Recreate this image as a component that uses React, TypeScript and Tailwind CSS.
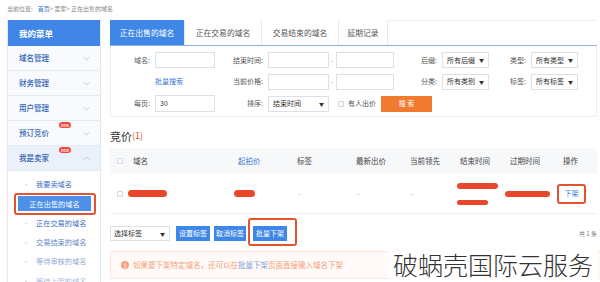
import React from "react";

const FONT = "font-['Noto_Sans_CJK_SC','Noto_Sans',sans-serif]";

function Chevron({ up = false }: { up?: boolean }) {
  return (
    <svg width="7" height="5" viewBox="0 0 7 5" className="text-[#c3cbd6]">
      <path
        d={up ? "M0.5 4L3.5 1L6.5 4" : "M0.5 1L3.5 4L6.5 1"}
        fill="none"
        stroke="currentColor"
        strokeWidth="0.9"
      />
    </svg>
  );
}

function NewBadge() {
  return (
    <span className="absolute -top-[5px] left-[40px] flex h-[6px] w-[12px] items-center justify-center rounded-[3px] bg-[#f0493a] text-[4px] leading-none text-white">
      new
    </span>
  );
}

function MenuItem({
  label,
  badge = false,
  open = false,
}: {
  label: string;
  badge?: boolean;
  open?: boolean;
}) {
  return (
    <div
      className={`flex h-[25px] items-center justify-between border-b border-[#e6ebf2] pl-[11px] pr-[10px] ${
        open ? "bg-[#ebf1fa]" : "bg-[#f8fafd]"
      }`}
    >
      <span className="relative text-[7.5px] font-medium text-[#2f62b0]">
        {label}
        {badge && <NewBadge />}
      </span>
      <Chevron up={open} />
    </div>
  );
}

function SubItem({ label, tone }: { label: string; tone: string }) {
  return (
    <div className="flex h-[19.3px] items-center pl-[15px]">
      <span className="mr-[7px] text-[6px] text-[#b9c2ce]">•</span>
      <span className={`text-[7.2px] ${tone}`}>{label}</span>
    </div>
  );
}

function Sidebar() {
  return (
    <div className="h-[262px] w-[94px] shrink-0 border-x border-[#e3e8ef] bg-white">
      <div className="flex h-[26px] items-center bg-[#4186e6] pl-[11px] text-[8.5px] font-bold text-white">
        我的菜单
      </div>
      <MenuItem label="域名管理" />
      <MenuItem label="财务管理" />
      <MenuItem label="用户管理" />
      <MenuItem label="预订竞价" badge />
      <MenuItem label="我是卖家" badge open />
      <div className="pt-[4px]">
        <SubItem label="我要卖域名" tone="text-[#3a6cc0]" />
        <div className="relative flex h-[19.3px] items-center">
          <div className="absolute left-[6px] top-[-1px] h-[22px] w-[82px] rounded-[3px] border-2 border-[#e4532f]" />
          <div className="ml-[10px] flex h-[15px] w-[73px] items-center justify-center bg-[#4c90ea] text-[7.2px] text-white">
            正在出售的域名
          </div>
        </div>
        <SubItem label="正在交易的域名" tone="text-[#3a6cc0]" />
        <SubItem label="交易结束的域名" tone="text-[#5f86c8]" />
        <SubItem label="等待审核的域名" tone="text-[#93aad6]" />
        <SubItem label="等待上架的域名" tone="text-[#a9bbe0]" />
      </div>
    </div>
  );
}

function Input({ w, value }: { w: string; value?: string }) {
  return (
    <div
      className={`flex h-[16px] items-center border border-[#dde1e7] bg-white pl-[4px] text-[7px] text-[#333] ${w}`}
    >
      {value}
    </div>
  );
}

function Select({ w, value }: { w: string; value: string }) {
  return (
    <div
      className={`flex h-[16px] items-center justify-between border border-[#dde1e7] bg-white pl-[4px] pr-[4px] text-[7px] text-[#333] ${w}`}
    >
      <span>{value}</span>
      <span className="text-[5px]">▼</span>
    </div>
  );
}

function Label({ w, text }: { w: string; text: string }) {
  return (
    <div className={`pr-[5px] text-right text-[7px] text-[#555] ${w}`}>
      {text}
    </div>
  );
}

function Tabs() {
  const tabs = ["正在出售的域名", "正在交易的域名", "交易结束的域名", "延期记录"];
  return (
    <div className="flex h-[26px] border-b border-[#8fb2e6] bg-white">
      {tabs.map((t, i) => (
        <div
          key={t}
          className={`flex items-center border-r border-[#e6e9ee] text-[7.8px] ${
            i === 0
              ? "w-[75px] justify-center bg-[#3f87e6] text-white"
              : i === 3
                ? "w-[49px] justify-center text-[#555]"
                : "w-[77px] justify-center text-[#555]"
          }`}
        >
          {t}
        </div>
      ))}
      <div className="flex-1 border-t border-[#eef0f3]" />
    </div>
  );
}

function SearchForm() {
  return (
    <div className="flex flex-col gap-[6px] border-x border-b border-[#eceef2] pb-[4px] pt-[6px]">
      <div className="flex items-center">
        <Label w="w-[44px]" text="域名:" />
        <Input w="w-[60px]" />
        <Label w="w-[53px]" text="结束时间:" />
        <Input w="w-[61px]" />
        <div className="w-[7px] text-center text-[7px] text-[#999]">-</div>
        <Input w="w-[58px]" />
        <Label w="w-[48px]" text="后缀:" />
        <Select w="w-[47px]" value="所有后缀" />
        <Label w="w-[42px]" text="类型:" />
        <Select w="w-[47px]" value="所有类型" />
      </div>
      <div className="flex h-[15px] items-center">
        <div className="w-[44px]" />
        <div className="w-[60px] text-[7px] text-[#3a76d4]">批量搜索</div>
        <Label w="w-[53px]" text="当前价格:" />
        <Input w="w-[61px]" />
        <div className="w-[7px] text-center text-[7px] text-[#999]">-</div>
        <Input w="w-[58px]" />
        <Label w="w-[48px]" text="分类:" />
        <Select w="w-[47px]" value="所有类别" />
        <Label w="w-[42px]" text="标签:" />
        <Select w="w-[47px]" value="所有标签" />
      </div>
      <div className="flex h-[17px] items-center">
        <Label w="w-[44px]" text="每页:" />
        <Input w="w-[60px] h-[17px]" value="30" />
        <Label w="w-[53px]" text="排序:" />
        <Select w="w-[61px]" value="结束时间" />
        <div className="ml-[9px] h-[6px] w-[6px] rounded-[1px] border border-[#cfd4db]" />
        <div className="ml-[4px] text-[7px] text-[#555]">有人出价</div>
        <div className="ml-[5px] flex h-[16px] w-[51px] items-center justify-center bg-[#f07b2f] text-[7px] text-white">
          搜 索
        </div>
      </div>
    </div>
  );
}

function Bar({ w, h = "h-[7px]", cls = "" }: { w: string; h?: string; cls?: string }) {
  return <div className={`rounded-full bg-[#e9472b] ${w} ${h} ${cls}`} />;
}

function Check() {
  return <div className="h-[6px] w-[6px] rounded-[1px] border border-[#d3d7dd] bg-white" />;
}

const COLS = "grid grid-cols-[18px_106px_63px_59px_54px_47px_48px_52px_1fr]";

function Table() {
  return (
    <div>
      <div className={`${COLS} h-[26px] items-center bg-[#f7f8fa] text-[7.5px] text-[#444]`}>
        <div className="pl-[7px]">
          <Check />
        </div>
        <div className="pl-[5px]">域名</div>
        <div className="pl-[4px] text-[#3a76d4]">起拍价</div>
        <div>标签</div>
        <div>最新出价</div>
        <div>当前领先</div>
        <div className="pl-[3px]">结束时间</div>
        <div className="pl-[5px]">过期时间</div>
        <div className="pl-[6px]">操作</div>
      </div>
      <div className={`${COLS} h-[40px] items-center border-b border-[#eef0f3] text-[7px] text-[#999]`}>
        <div className="pl-[7px]">
          <Check />
        </div>
        <div>
          <Bar w="w-[39px]" />
        </div>
        <div>
          <Bar w="w-[21px]" />
        </div>
        <div className="pl-[1px]">-</div>
        <div className="pl-[1px]">-</div>
        <div className="pl-[1px]">-</div>
        <div className="flex flex-col gap-[11px]">
          <Bar w="w-[41px]" h="h-[6px]" />
          <Bar w="w-[31px]" h="h-[5px]" />
        </div>
        <div>
          <Bar w="w-[45px]" h="h-[6px]" />
        </div>
        <div>
          <div className="flex h-[20px] w-[29px] items-center justify-center rounded-[3px] border-2 border-[#e4532f] text-[7px] text-[#3a76d4]">
            下架
          </div>
        </div>
      </div>
    </div>
  );
}

function BlueBtn({ text, w }: { text: string; w: string }) {
  return (
    <div className={`flex h-[15px] items-center justify-center bg-[#3f87e6] text-[7px] text-white ${w}`}>
      {text}
    </div>
  );
}

export default function App() {
  return (
    <div className={`relative h-[282px] w-[600px] overflow-hidden bg-white ${FONT}`}>
      <div className="pl-[7px]">
        <div className="flex h-[20px] items-start pt-[4px] text-[6px] text-[#888]">
          当前位置: <span className="ml-[5px] text-[#3a76d4]">首页</span>
          <span>&gt; 卖家&gt; 正在出售的域名</span>
        </div>
        <div className="flex">
          <Sidebar />
          <div className="ml-[9px] w-[487px]">
            <Tabs />
            <SearchForm />
            <div className="mt-[7px] flex h-[24px] items-center text-[11px] text-[#333]">
              竞价<span className="text-[9px] text-[#e0502a]">(1)</span>
            </div>
            <Table />
            <div className="mt-[12px] flex h-[15px] items-center">
              <div className="flex h-[15px] w-[60px] items-center justify-between border border-[#dde1e7] pl-[3px] pr-[4px] text-[7px] text-[#333]">
                <span>选择标签</span>
                <span className="text-[5px]">▼</span>
              </div>
              <div className="ml-[6px]">
                <BlueBtn text="设置标签" w="w-[34px]" />
              </div>
              <div className="ml-[4px]">
                <BlueBtn text="取消标签" w="w-[32px]" />
              </div>
              <div className="relative ml-[7px]">
                <div className="absolute left-[-5px] top-[-8px] h-[28px] w-[49px] rounded-[3px] border-2 border-[#e4532f]" />
                <BlueBtn text="批量下架" w="w-[34px]" />
              </div>
              <div className="ml-auto text-[6px] text-[#777]">共 1 条</div>
            </div>
            <div className="mt-[10px] flex h-[28px] w-[495px] items-center border border-[#fde6dc] bg-[#fffaf7] pl-[10px] text-[7.5px] text-[#f3a07c]">
              <span className="mr-[4px] flex h-[8px] w-[8px] items-center justify-center rounded-full bg-[#f5a47e] text-[6px] font-bold text-white">
                !
              </span>
              如果要下架特定域名，还可以在<span className="text-[#7fa2e0]">批量下架</span>页面直接输入域名下架
            </div>
          </div>
        </div>
      </div>
      <div className="absolute left-[388px] top-[247px] bg-white pl-[5px] pr-[4px] text-[25px] font-light leading-[34px] text-[#333]">
        破蜗壳国际云服务
      </div>
    </div>
  );
}
